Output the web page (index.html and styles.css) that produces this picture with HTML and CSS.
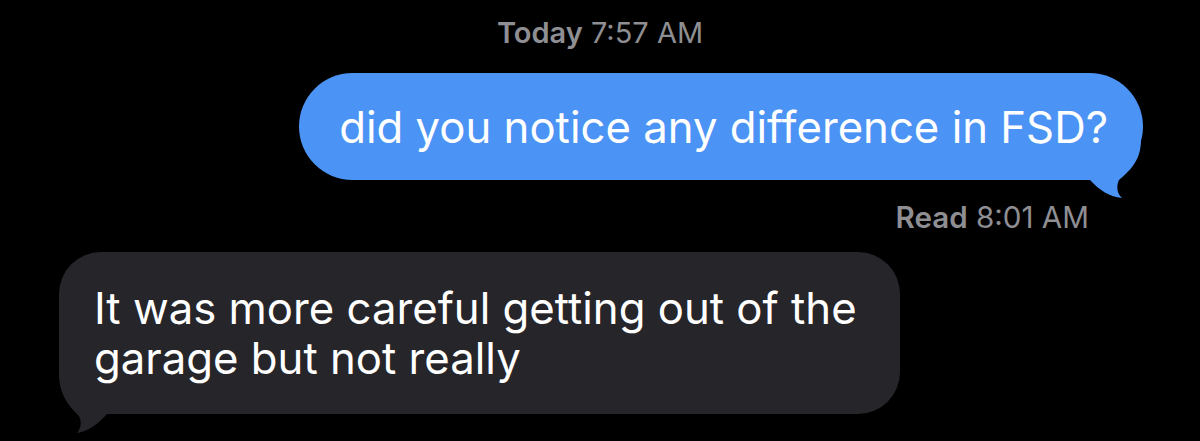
FILE: index.html
```html
<!DOCTYPE html>
<html lang="en">

<head>
    <meta charset="UTF-8">
    <meta name="viewport" content="width=device-width, initial-scale=1.0">
    <title>Messages</title>
    <link rel="stylesheet" href="styles.css">
</head>

<body>
    <div class="thread">
        <div class="stamp"><b>Today</b> 7:57 AM</div>

        <div class="row out">
            <div class="bubble blue">
                did you notice any difference in FSD?
                <svg class="tail" width="63" height="60" viewBox="0 0 63 60">
                    <path d="M61,0 C61,22 48,32 39,40 C36,46 37,54 42,58 C30,57 19,50 10,40 L0,40 L0,0 Z" />
                </svg>
            </div>
        </div>
        <div class="receipt"><b>Read</b> 8:01 AM</div>

        <div class="row in">
            <div class="bubble gray">
                It was more careful getting out of the garage but not really
                <svg class="tail" width="60" height="60" viewBox="0 0 60 60">
                    <path d="M0,0 C0,22 12,34 20,42 C23,48 22,54 18,59 C30,57 40,49 48,40 L60,40 L60,0 Z" />
                </svg>
            </div>
        </div>
    </div>
</body>

</html>
```

FILE: styles.css
```css
* {
    margin: 0;
    padding: 0;
    box-sizing: border-box;
}

body {
    background-color: #000;
    font-family: Inter, "Noto Sans", sans-serif;
    color: #fff;
}

.thread {
    padding: 15px 0 28px;
}

.stamp {
    text-align: center;
    font-size: 29px;
    line-height: 36px;
    color: #8e8e93;
}

.stamp b,
.receipt b {
    font-weight: 600;
}

.row {
    display: flex;
}

.row.out {
    justify-content: flex-end;
    padding-right: 57px;
    margin-top: 22px;
}

.row.in {
    padding-left: 59px;
    margin-top: 17px;
}

.bubble {
    position: relative;
    font-size: 43.7px;
    line-height: 50px;
}

.blue {
    background-color: #4b93f4;
    height: 107px;
    border-radius: 54px;
    padding: 2px 35px 0 40px;
    display: flex;
    align-items: center;
}

.gray {
    background-color: #26252a;
    width: 841px;
    border-radius: 42px;
    padding: 32px 30px 30px 35px;
}

.tail {
    position: absolute;
    bottom: -20px;
    z-index: -1;
}

.blue .tail {
    right: 0;
    fill: #4b93f4;
}

.gray .tail {
    left: 0;
    fill: #26252a;
}

.receipt {
    text-align: right;
    padding-right: 111px;
    margin-top: 19px;
    font-size: 29.6px;
    line-height: 36px;
    color: #8e8e93;
}
```
